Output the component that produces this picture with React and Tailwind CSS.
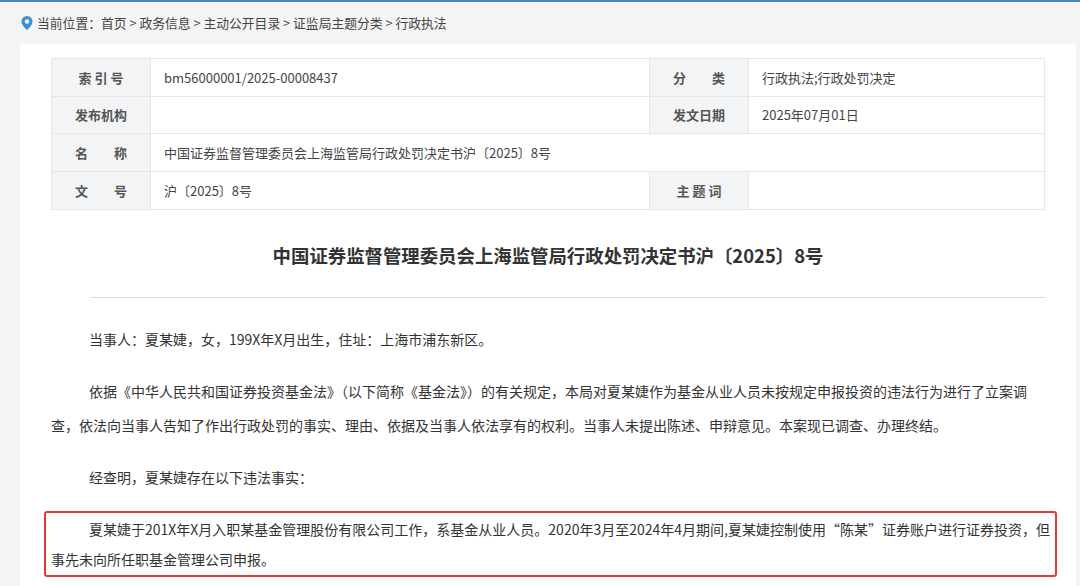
import React from 'react';

const Row = ({ l1, v1, l2, v2, span }) => (
  <div className="flex border-b border-[#e3e7ec] h-[37.5px] last:border-b-0">
    <div className="w-[99px] bg-[#f2f4f6] border-r border-[#e3e7ec] flex items-center justify-center text-[13px] font-bold text-[#555]">{l1}</div>
    <div className={`${span ? 'flex-1' : 'w-[498px]'} flex items-center pl-[13px] text-[13px] text-[#444]`}>{v1}</div>
    {!span && (
      <>
        <div className="w-[100px] bg-[#f2f4f6] border-x border-[#e3e7ec] flex items-center justify-center text-[13px] font-bold text-[#555]">{l2}</div>
        <div className="flex-1 flex items-center pl-[13px] text-[13px] text-[#444]">{v2}</div>
      </>
    )}
  </div>
);

const App = () => {
  return (
    <div className="w-[1080px] h-[586px] overflow-hidden bg-[#f4f4f4] border-t-2 border-[#4a86c0]" style={{ fontFamily: '"Noto Sans CJK SC", "Noto Sans", sans-serif' }}>
      <div className="flex items-center h-[42px] pl-[21px] text-[12.8px] text-[#444] gap-1">
        <svg width="12" height="14" viewBox="0 0 12 14"><path d="M6 0a5.5 5.5 0 0 0-5.5 5.5C.5 9.5 6 14 6 14s5.5-4.5 5.5-8.5A5.5 5.5 0 0 0 6 0zm0 7.8a2.3 2.3 0 1 1 0-4.6 2.3 2.3 0 0 1 0 4.6z" fill="#3d8fd6"/></svg>
        <span>当前位置：首页 &gt; 政务信息 &gt; 主动公开目录 &gt; 证监局主题分类 &gt; 行政执法</span>
      </div>
      <div className="ml-[20px] mr-[4px] bg-white h-[560px] pt-[14px] pl-[31px] pr-[31px]">
        <div className="border border-[#e3e7ec]">
          <Row l1="索 引 号" v1="bm56000001/2025-00008437" l2="分　　类" v2="行政执法;行政处罚决定" />
          <Row l1="发布机构" v1="" l2="发文日期" v2="2025年07月01日" />
          <Row l1="名　　称" v1="中国证券监督管理委员会上海监管局行政处罚决定书沪〔2025〕8号" span />
          <Row l1="文　　号" v1="沪〔2025〕8号" l2="主 题 词" v2="" />
        </div>
        <h1 className="text-center text-[18.4px] font-bold text-[#333] mt-[30px] leading-[30px]">中国证券监督管理委员会上海监管局行政处罚决定书沪〔2025〕8号</h1>
        <div className="ml-[40px] border-b border-[#ddd] mt-[27px]" />
        <div className="text-[14px] text-[#333] leading-[34px] mt-[24px]">
          <p className="indent-[38px]">当事人：夏某婕，女，199X年X月出生，住址：上海市浦东新区。</p>
          <p className="indent-[38px] mt-[18px]">依据《中华人民共和国证券投资基金法》（以下简称《基金法》）的有关规定，本局对夏某婕作为基金从业人员未按规定申报投资的违法行为进行了立案调查，依法向当事人告知了作出行政处罚的事实、理由、依据及当事人依法享有的权利。当事人未提出陈述、申辩意见。本案现已调查、办理终结。</p>
          <p className="indent-[38px] mt-[18px]">经查明，夏某婕存在以下违法事实：</p>
          <div className="-ml-[7px] -mr-[12px] mt-[17px] border-2 border-[#e03a3a] rounded-[3px] px-[5px] py-[1px]">
            <p className="indent-[38px] leading-[30px]">夏某婕于201X年X月入职某基金管理股份有限公司工作，系基金从业人员。2020年3月至2024年4月期间,夏某婕控制使用“陈某”证券账户进行证券投资，但事先未向所任职基金管理公司申报。</p>
          </div>
        </div>
      </div>
    </div>
  );
};

export default App;
